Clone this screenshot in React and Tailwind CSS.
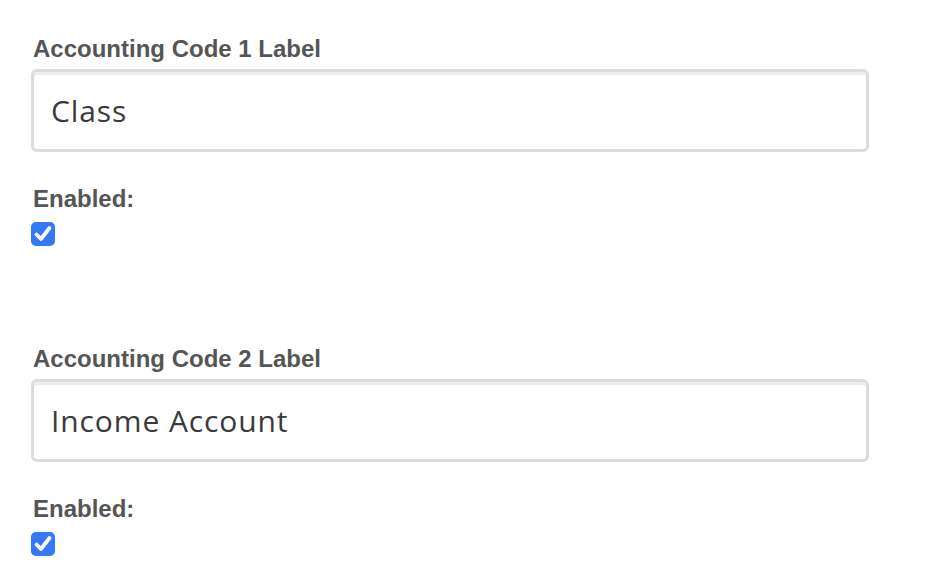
import { useState } from 'react'

function Check({ checked, onToggle }) {
  return (
    <button
      type="button"
      onClick={onToggle}
      className={`w-6 h-6 rounded-[5px] flex items-center justify-center ${checked ? 'bg-[#3478f6]' : 'bg-white border-2 border-[#bbb]'}`}
    >
      {checked && (
        <svg width="24" height="24" viewBox="0 0 24 24" fill="none">
          <path d="M5.5 12.5 L10 17 L18.5 6" stroke="#fff" strokeWidth="3.8" strokeLinecap="round" strokeLinejoin="round" />
        </svg>
      )}
    </button>
  )
}

function CodeField({ label, value, onChange, enabled, onToggle }) {
  return (
    <div>
      <div className="pl-[2px] text-[24px] leading-[28px] font-bold text-[#555]">{label}</div>
      <input
        type="text"
        value={value}
        onChange={onChange}
        className="mt-[6px] block w-[838px] h-[83px] border-[3px] border-[#dcdcdc] rounded-[6px] bg-white pl-[17px] text-[30px] tracking-[0.9px] text-[#3a3a3a] shadow-[inset_0_3px_0_#ededed] outline-none font-['Open_Sans',sans-serif]"
      />
      <div className="mt-[33px] pl-[2px] text-[24px] leading-[28px] font-bold text-[#555]">Enabled:</div>
      <div className="mt-[9px]">
        <Check checked={enabled} onToggle={onToggle} />
      </div>
    </div>
  )
}

function App() {
  const [codes, setCodes] = useState([
    { label: 'Accounting Code 1 Label', value: 'Class', enabled: true },
    { label: 'Accounting Code 2 Label', value: 'Income Account', enabled: true },
  ])

  const update = (i, patch) => {
    setCodes(codes.map((c, idx) => (idx === i ? { ...c, ...patch } : c)))
  }

  return (
    <div className="min-h-screen bg-white pl-[31px] pt-[35px] font-['Liberation_Sans',Arial,sans-serif]">
      <div className="flex flex-col gap-[99px]">
        {codes.map((c, i) => (
          <CodeField
            key={i}
            label={c.label}
            value={c.value}
            enabled={c.enabled}
            onChange={(e) => update(i, { value: e.target.value })}
            onToggle={() => update(i, { enabled: !c.enabled })}
          />
        ))}
      </div>
    </div>
  )
}

export default App
